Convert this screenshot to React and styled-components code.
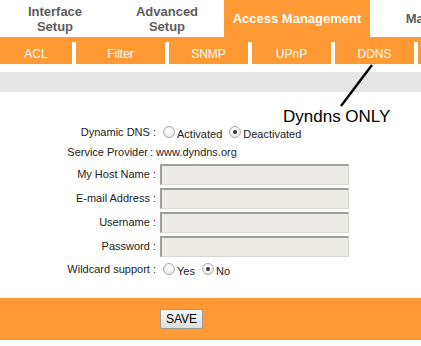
import styled, { createGlobalStyle } from "styled-components";

const ORANGE = "#ff9933";

const Global = createGlobalStyle`
  html, body { margin: 0; padding: 0; background: #fff; }
  body { font-family: "Liberation Sans", Arial, sans-serif; overflow: hidden; }
  * { box-sizing: border-box; }
`;

export default function App() {
  return (
    <Page>
      <Global />
      <MainTabs>
        <MainTab $w={110}>Interface<br />Setup</MainTab>
        <MainTab $w={114}>Advanced<br />Setup</MainTab>
        <MainTab $w={146} $active>Access Management</MainTab>
        <MainTab $w={150}>Maintenance</MainTab>
      </MainTabs>
      <SubNav>
        <SubTab $w={72}>ACL</SubTab>
        <SubTab $w={89}>Filter</SubTab>
        <SubTab $w={79}>SNMP</SubTab>
        <SubTab $w={79}>UPnP</SubTab>
        <SubTab $w={79}>DDNS</SubTab>
        <SubTab $w={79}></SubTab>
      </SubNav>
      <GrayBar />
      <Form>
        <Row $h={18}>
          <Label>Dynamic DNS :</Label>
          <Value>
            <Radio />
            <RadioText>Activated</RadioText>
            <Radio $checked />
            <RadioText>Deactivated</RadioText>
          </Value>
        </Row>
        <Row $h={18}>
          <Label $w={148}>Service Provider</Label>
          <Value $gap={2}>: www.dyndns.org</Value>
        </Row>
        <Row $h={22}>
          <Label>My Host Name :</Label>
          <Value><Field /></Value>
        </Row>
        <Row $h={22}>
          <Label>E-mail Address :</Label>
          <Value><Field /></Value>
        </Row>
        <Row $h={22}>
          <Label>Username :</Label>
          <Value><Field /></Value>
        </Row>
        <Row $h={22}>
          <Label>Password :</Label>
          <Value><Field type="password" /></Value>
        </Row>
        <Row $h={20}>
          <Label>Wildcard support :</Label>
          <Value>
            <Radio />
            <RadioText>Yes</RadioText>
            <Radio $checked />
            <RadioText>No</RadioText>
          </Value>
        </Row>
      </Form>
      <Footer>
        <SaveButton>SAVE</SaveButton>
      </Footer>
      <Note>Dyndns ONLY</Note>
      <Pointer width="421" height="346">
        <line x1="372" y1="65" x2="341" y2="106" stroke="#000" strokeWidth="2.4" />
      </Pointer>
    </Page>
  );
}

const Page = styled.div`
  position: relative;
  width: 421px;
  height: 346px;
  overflow: hidden;
  display: flex;
  flex-direction: column;
`;

const MainTabs = styled.div`
  display: flex;
  height: 37px;
  white-space: nowrap;
`;

const MainTab = styled.div`
  flex: 0 0 ${p => p.$w}px;
  display: flex;
  align-items: center;
  justify-content: center;
  text-align: center;
  font-size: 13px;
  font-weight: 700;
  line-height: 15px;
  color: ${p => (p.$active ? "#fff" : "#5c5c5c")};
  background: ${p => (p.$active ? ORANGE : "#fff")};
`;

const SubNav = styled.div`
  display: flex;
  gap: 4px;
  height: 27px;
  border-top: 5px solid ${ORANGE};
  background: #fff;
`;

const SubTab = styled.div`
  flex: 0 0 ${p => p.$w}px;
  background: ${ORANGE};
  color: #fff;
  font-size: 12px;
  display: flex;
  align-items: center;
  justify-content: center;
  padding-top: 1px;
`;

const GrayBar = styled.div`
  height: 20px;
  margin-top: 8px;
  background: #e6e6e6;
`;

const Form = styled.div`
  display: flex;
  flex-direction: column;
  gap: 2px;
  padding-top: 31px;
  font-size: 11px;
  color: #222;
`;

const Row = styled.div`
  display: flex;
  align-items: center;
  height: ${p => p.$h}px;
`;

const Label = styled.div`
  flex: 0 0 ${p => p.$w || 156}px;
  text-align: right;
  white-space: nowrap;
`;

const Value = styled.div`
  display: flex;
  align-items: center;
  margin-left: ${p => (p.$gap != null ? p.$gap : 4)}px;
`;

const Radio = styled.span`
  width: 12px;
  height: 12px;
  margin: 0 2px 0 3px;
  border-radius: 50%;
  border: 1px solid #a9a9a9;
  background: radial-gradient(circle at 50% 35%, #ffffff 0%, #e4e4e4 100%);
  display: inline-flex;
  align-items: center;
  justify-content: center;
  &::after {
    content: "";
    width: 4px;
    height: 4px;
    border-radius: 50%;
    background: #333;
    display: ${p => (p.$checked ? "block" : "none")};
  }
`;

const RadioText = styled.span`
  margin-right: 4px;
  padding-top: 3px;
`;

const Field = styled.input`
  width: 189px;
  height: 21px;
  background: #ecebe6;
  border-top: 2px solid #9f9f9f;
  border-left: 2px solid #9f9f9f;
  border-right: 1px solid #d8d8d4;
  border-bottom: 1px solid #d8d8d4;
  outline: none;
  padding: 0 3px;
  font: inherit;
`;

const Footer = styled.div`
  margin-top: 19px;
  height: 42px;
  background: ${ORANGE};
  display: flex;
  align-items: center;
  padding-left: 160px;
`;

const SaveButton = styled.button`
  width: 43px;
  height: 20px;
  padding: 0;
  border: 1px solid #9a9a9a;
  border-radius: 2px;
  background: linear-gradient(#f6f6f6, #dedede);
  font-family: "Liberation Sans", Arial, sans-serif;
  font-size: 12px;
  color: #000;
`;

const Note = styled.div`
  position: absolute;
  left: 283px;
  top: 108px;
  font-size: 17px;
  line-height: 1;
  color: #000;
  white-space: nowrap;
`;

const Pointer = styled.svg`
  position: absolute;
  left: 0;
  top: 0;
  pointer-events: none;
`;
